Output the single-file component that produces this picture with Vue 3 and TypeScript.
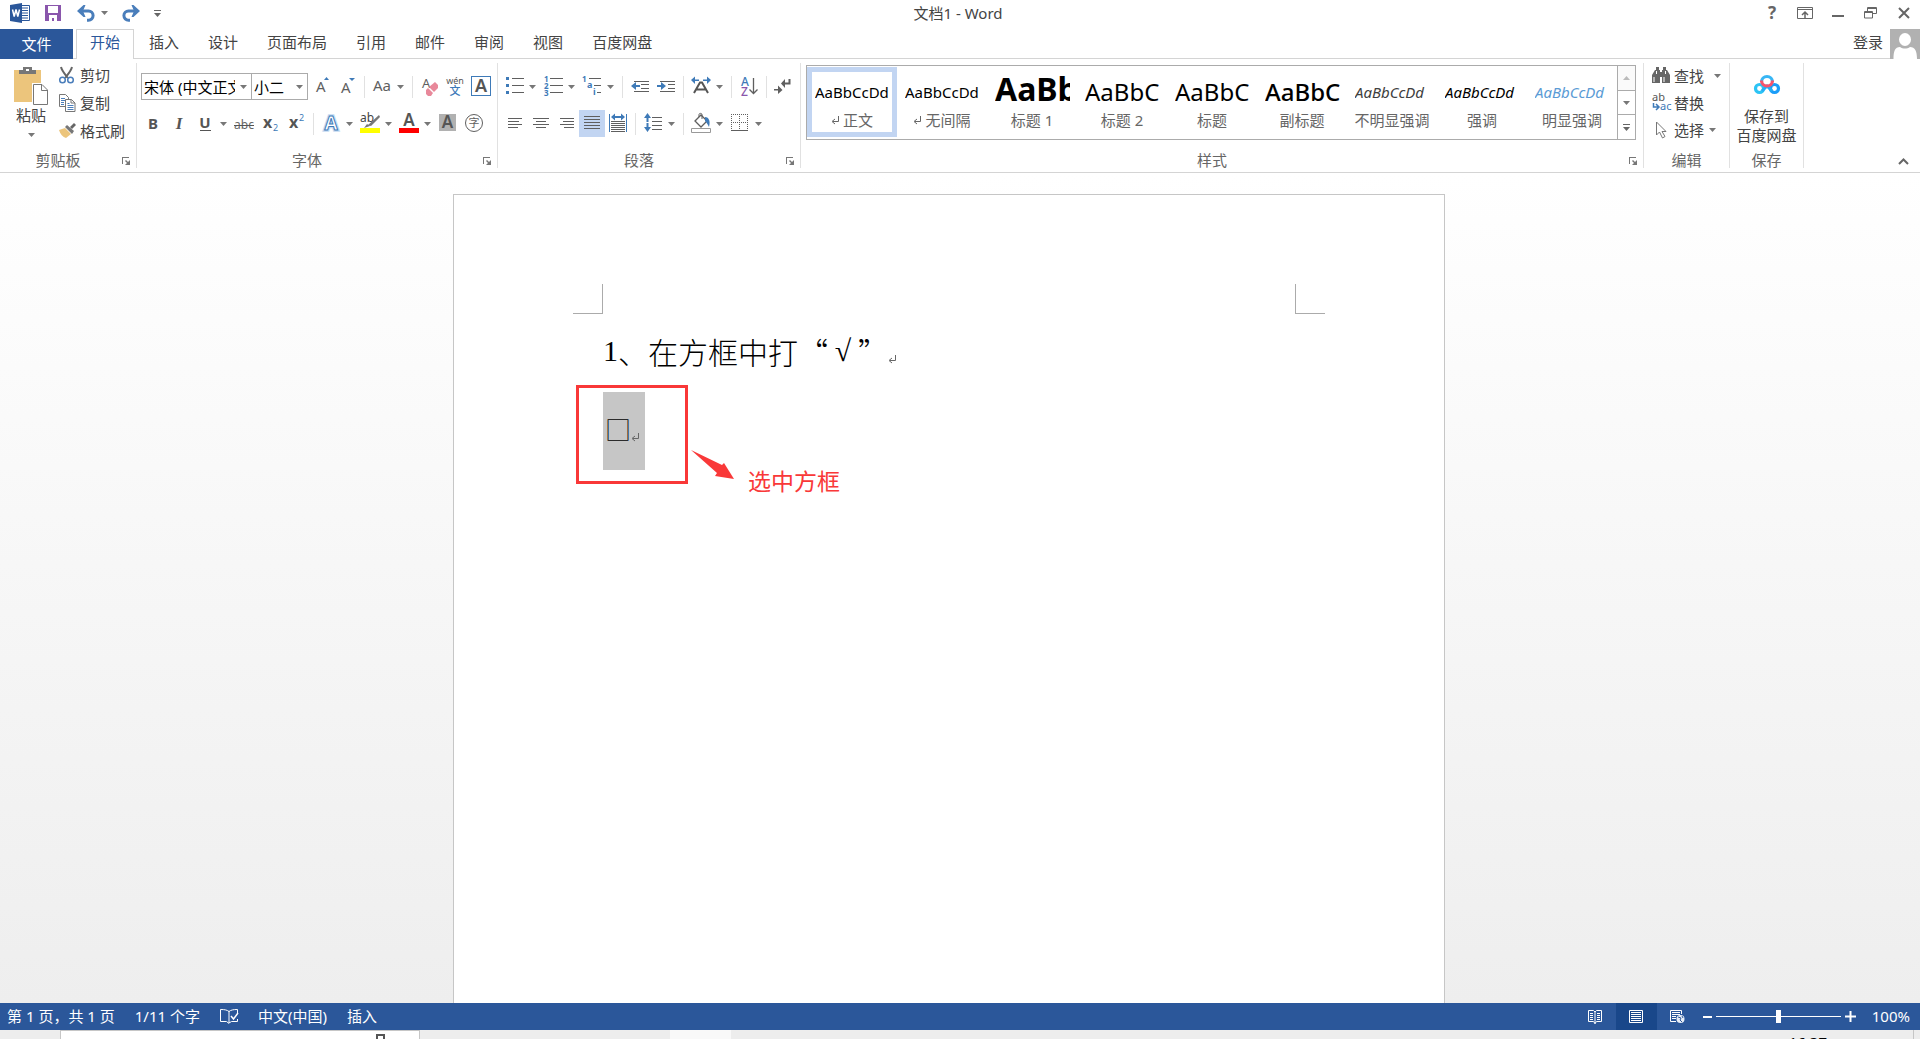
<script setup lang="ts">
import { h, ref } from 'vue'

interface IconDef { w: number; h: number; body: string }
interface Tool { icon: string; label: string; split?: boolean; active?: boolean; sep?: boolean }
interface StyleItem { sample: string; name: string; kind: string; mark?: boolean }

const G = '#5f5f5f'
const B = '#3e7ab8'
const sans = 'Noto Sans, Open Sans, sans-serif'
const cjk = 'Noto Sans CJK SC, sans-serif'

const text = (x: number, y: number, size: number, s: string, fill = G, extra = '') =>
  `<text x="${x}" y="${y}" font-size="${size}" font-family="${sans}" fill="${fill}" ${extra}>${s}</text>`
const lines = (rows: number[][], stroke = G) =>
  rows.map(([x1, x2, y]) => `<rect x="${x1}" y="${y}" width="${x2 - x1}" height="1" fill="${stroke}"/>`).join('')
const tool = (body: string): IconDef => ({ w: 22, h: 21, body })
const mid = 'text-anchor="middle"'

const icons: Record<string, IconDef> = {
  caret: { w: 7, h: 4, body: '<path d="M0 0h7L3.5 4z" fill="#777"/>' },
  caretUp: { w: 7, h: 4, body: '<path d="M0 4h7L3.5 0z" fill="#bbb"/>' },
  more: { w: 7, h: 7, body: '<path d="M0 0h7v1H0zM0 3h7L3.5 7z" fill="#666"/>' },
  launcher: { w: 8, h: 8, body: '<path d="M0 7V0h7v1H1v6z" fill="#777"/><path d="M8 3v5H3l2-2-2-2 1-1 2 2z" fill="#777"/>' },
  word: { w: 20, h: 20, body: '<path d="M11 2.500h8.500v15H11" fill="#fff" stroke="#2b579a"/><path d="M12 5h6M12 7.500h6M12 10h6M12 12.500h6M12 15h6" stroke="#2b579a"/><path d="M0 2 12 0v20L0 18z" fill="#2b579a"/><path d="M2.500 6.500l1.700 7 1.800-7 1.800 7 1.700-7" fill="none" stroke="#fff" stroke-width="1.500"/>' },
  save: { w: 16, h: 16, body: '<path d="M0 0h16v16H0z" fill="#8a56ac"/><path d="M3 1h10v7H3z" fill="#fff"/><path d="M4 10h8v6H9v-3H7v3H4z" fill="#fff"/><path d="M7 13h2v3H7z" fill="#8a56ac"/>' },
  undo: { w: 19, h: 17, body: '<path d="M3 6h8.500a4.500 4.500 0 0 1 0 9.200H10" fill="none" stroke="#4a7ebb" stroke-width="3"/><path d="M0 6 6.500 0h2L6 6l2.500 6h-2z" fill="#4a7ebb"/>' },
  redo: { w: 19, h: 17, body: '<path d="M16 6H7.500a4.500 4.500 0 0 0 0 9.200H9" fill="none" stroke="#4a7ebb" stroke-width="3"/><path d="M19 6 12.500 0h-2L13 6l-2.500 6h2z" fill="#4a7ebb"/>' },
  help: { w: 16, h: 18, body: text(8, 15, 17, '?', '#666', mid + ' font-weight="700"') },
  ribbonOpts: { w: 16, h: 12, body: '<path d="M.5.5h15v11H.5zM0 2.500h16" fill="none" stroke="#666"/><path d="M8 11V5M5 8l3-3 3 3" fill="none" stroke="#666" stroke-width="1.500"/>' },
  min: { w: 12, h: 12, body: '<path d="M0 8h12v2H0z" fill="#666"/>' },
  restore: { w: 13, h: 12, body: '<path d="M3.500 4V.5h9v6H9M3 1.500h10M.5 4.500h8v6.500h-8zM0 5.500h9" fill="none" stroke="#666"/>' },
  close: { w: 12, h: 12, body: '<path d="M1 1l10 10M11 1 1 11" stroke="#666" stroke-width="2"/>' },
  avatar: { w: 30, h: 30, body: '<path d="M0 0h30v30H0z" fill="#b1b1b1"/><ellipse cx="15" cy="10.500" rx="6" ry="6.500" fill="#fff"/><path d="M3.500 30c0-8 1.500-12 6.500-12 3 2 7 2 10 0 5 0 7 4 7 12z" fill="#fff"/>' },
  paste: { w: 34, h: 38, body: '<path d="M0 3h27v32H0z" fill="#ecc57c"/><path d="M5 7V3h4V0h9v3h4v4z" fill="#777"/><path d="M12 2h3v2h-3z" fill="#fff"/><path d="M18 16h11l6 6v16H18z" fill="#fff"/><path d="M19.500 17.500h8.500l5.500 5.500v14.500h-14zM27.500 17.500v6h6" fill="#fff" stroke="#777"/>' },
  cut: { w: 18, h: 18, body: '<path d="M3 1c1 4 3 6 7 11M14 1c-1 4-3 6-7 11" fill="none" stroke="#666" stroke-width="2"/><circle cx="4.500" cy="14" r="2.800" fill="#fff" stroke="#4a7ebb" stroke-width="1.500"/><circle cx="12.500" cy="14" r="2.800" fill="#fff" stroke="#4a7ebb" stroke-width="1.500"/>' },
  copy: { w: 18, h: 18, body: '<path d="M1.500.5h6l3 3v9h-9z" fill="#fff" stroke="#777"/><path d="M3 4.500h4M3 6.500h5M3 8.500h3M3 10.500h3" stroke="#4a7ebb"/><path d="M7.500 5.500h6l3.500 3.500v8.500H7.500zM13 5.500V9h4" fill="#fff" stroke="#777"/><path d="M9.500 9.500h2M9.500 11.500h6M9.500 13.500h6M9.500 15.500h6" stroke="#4a7ebb"/>' },
  painter: { w: 18, h: 16, body: '<path d="M1 7l6-2 6 6-5 4C5 14 2 11 1 7z" fill="#ecc57c"/><path d="M7 4l2-2 7 6-2 3z" fill="#777"/><path d="M12 4l4-4 2 2-4 4z" fill="#666"/>' },
  grow: tool(text(6, 16, 15, 'A') + `<path d="M14 4l2.500-3 2.500 3z" fill="${B}"/>`),
  shrink: tool(text(5, 17, 15, 'A') + `<path d="M13 2h6l-3 3z" fill="${B}"/>`),
  case: tool(text(2, 15, 15, 'Aa')),
  clear: tool(text(3, 12, 13, 'A') + '<path d="M7 14l2-2 5 5-2 3H9l-2-2z" fill="#e8889a"/><path d="M10 11l6-5 3 3v3l-4 4z" fill="#e8889a"/>'),
  phonetic: tool(text(10, 8, 9, 'wén', '#555', mid) + `<text x="10" y="19" font-size="11" font-family="${cjk}" fill="${B}" text-anchor="middle" font-weight="500">文</text>`),
  border: tool(`<rect x=".5" y=".5" width="19" height="19" fill="none" stroke="${B}"/>` + text(10, 16, 18, 'A', '#555', mid + ' font-weight="600"')),
  bold: tool(text(11, 16, 15, 'B', '#555', mid + ' font-weight="700"')),
  italic: tool(`<text x="11" y="16" font-size="17" font-family="Liberation Serif, serif" fill="#555" text-anchor="middle" font-style="italic" font-weight="700">I</text>`),
  underline: tool(text(11, 15, 15, 'U', '#555', mid + ' font-weight="700"') + '<path d="M6 17h11v1H6z" fill="#555"/>'),
  strike: tool(text(11, 16, 12, 'abc', '#666', mid) + '<path d="M1 12h20v1H1z" fill="#555"/>'),
  sub: tool(text(4, 15, 16, 'x', '#555', 'font-weight="700"') + text(14, 18, 9, '2', B)),
  sup: tool(text(4, 15, 16, 'x', '#555', 'font-weight="700"') + text(14, 8, 9, '2', B)),
  effects: tool(text(11, 17, 19, 'A', '#c7dcf2', mid + ' font-weight="700" stroke="#c7dcf2" stroke-width="3.5"') + text(11, 17, 19, 'A', '#fff', mid + ' font-weight="700" stroke="#3e7ab8" stroke-width="1"')),
  highlight: tool(text(1, 9, 12, 'ab', '#444') + '<path d="M20 2l1 2-9 9-3-1zM8 11l3 2-6 2z" fill="#777"/><path d="M1 15h20v5H1z" fill="#ff0"/>'),
  color: tool(text(11, 13, 17, 'A', '#555', mid + ' font-weight="600"') + '<path d="M1 15h20v5H1z" fill="red"/>'),
  shade: tool('<path d="M2 1h17v17H2z" fill="#b1b1b1"/>' + text(10.5, 15, 17, 'A', '#555', mid + ' font-weight="600"')),
  enclose: tool(`<circle cx="11" cy="10" r="8.500" fill="none" stroke="${G}"/><text x="11" y="14" font-size="11" font-family="${cjk}" fill="${G}" text-anchor="middle">字</text>`),
  bullets: tool(`<path d="M3 1h3v3H3zM3 8h3v3H3zM3 15h3v3H3z" fill="${B}"/>` + lines([[9, 21, 2], [9, 21, 9], [9, 21, 16]])),
  numbers: tool(text(2, 6, 8, '1', B, 'font-weight="700"') + text(2, 13, 8, '2', B, 'font-weight="700"') + text(2, 20, 8, '3', B, 'font-weight="700"') + lines([[8, 21, 2], [8, 21, 9], [8, 21, 16]])),
  multi: tool(text(1, 6, 8, '1', B, 'font-weight="700"') + text(6, 12, 9, 'a', B, 'font-weight="700"') + text(12, 19, 9, 'i', B, 'font-weight="700"') + lines([[8, 20, 2], [13, 20, 9], [16, 20, 16]])),
  outdent: tool(`<path d="M2 10l5-4v3h4v2H7v3z" fill="${B}"/>` + lines([[5, 20, 5], [12, 20, 8], [12, 20, 12], [5, 20, 15]])),
  indent: tool(`<path d="M11 10L6 6v3H2v2h4v3z" fill="${B}"/>` + lines([[5, 20, 5], [13, 20, 8], [13, 20, 12], [5, 20, 15]])),
  scale: tool(`<path d="M1 4l4-3.500v3h4v1.500H5v3zM21 4l-4-3.500v3h-4v1.500h4v3z" fill="${B}"/>` + `<path d="M4 17l6-10.500h2L18 17M6.500 13.500h9" fill="none" stroke="#555" stroke-width="2"/>`),
  sort: tool(text(3, 10, 12, 'A', B, 'font-weight="500"') + text(3, 20, 12, 'Z', '#8a56ac', 'font-weight="500"') + `<path d="M15.500 2v15M11.500 13.500l4 4 4-4" fill="none" stroke="${G}" stroke-width="1.300"/>`),
  marks: tool(`<path d="M16.500 3v4.500h-5" fill="none" stroke="${G}" stroke-width="2"/><path d="M12 3v9L8 7.500z" fill="${G}"/><path d="M1 13h4v-3.500l4.500 4.500L5 18v-3.500H1z" fill="${G}"/>`),
  left: tool(lines([[5, 19, 5], [5, 16, 8], [5, 19, 11], [5, 15, 14]])),
  center: tool(lines([[4, 20, 5], [7, 17, 8], [4, 20, 11], [7, 17, 14]])),
  right: tool(lines([[5, 19, 5], [8, 19, 8], [5, 19, 11], [9, 19, 14]])),
  justify: tool(lines([[3, 19, 3], [3, 19, 6], [3, 19, 9], [3, 19, 12], [3, 19, 15]])),
  distribute: tool(`<path d="M2 1h1v18H2zM19 1h1v18h-1zM4 4l4-3.500v2.500h6V.5L18 4l-4 3.500V5H8v2.500z" fill="${B}"/>` + lines([[4, 18, 8], [4, 18, 10], [4, 18, 12], [4, 18, 14], [4, 18, 16], [4, 18, 18]])),
  spacing: tool('<path d="M5.500 0L9 5H6.500v9H9l-3.500 5L2 14h2.500V5H2z" fill="#3e7ab8"/>' + '<path d="M2 9h7v1H2z" fill="#fff"/>' + lines([[10, 20, 4], [10, 20, 8], [10, 20, 12], [10, 20, 16]])),
  fill: tool(`<path d="M5 8l6-6 6 6-6 6z" fill="#fff" stroke="${G}" stroke-width="1.300"/><path d="M9 4V1.500c0-1.500 3-1.500 3 0V6" fill="none" stroke="${G}"/><path d="M15 4c3 0 6 3 4 10-1-2-2-4-4-6z" fill="${B}"/><path d="M1.500 15.500h19v4h-19z" fill="#fff" stroke="#999"/>`),
  borders: tool(`<path d="M2.500 1v17M10.500 1v17M18.500 1v17M2 1.500h17M2 9.500h17" stroke="${G}" stroke-dasharray="1 1"/><path d="M2 17h17v1H2z" fill="${G}"/>`),
  find: { w: 18, h: 17, body: '<path d="M0 8l3-5h5v13H0zM10 3h5l3 5v8h-8zM4 0h3v3H4zM11 0h3v3h-3zM8 5h2v5H8z" fill="#666"/><path d="M2 10v5M12 10v5M4.500 4v3M13.500 4v3" stroke="#fff"/>' },
  replace: { w: 20, h: 20, body: text(0, 8, 11, 'ab', '#555') + text(8, 17, 11, 'ac', B) + `<path d="M1.500 10v4H6M4 11l3 3-3 3" fill="none" stroke="${B}" stroke-width="1.500"/>` },
  select: { w: 18, h: 18, body: '<path d="M4.500 1v13l3-3 3 6 2.500-1.500-3-5h4z" fill="#fff" stroke="#777"/>' },
  netdisk: { w: 26, h: 21, body: '<circle cx="5.500" cy="14.500" r="4" fill="none" stroke="#2cc4f5" stroke-width="3.200"/><circle cx="20.500" cy="14.500" r="4" fill="none" stroke="#1a9cf8" stroke-width="3.200"/><path d="M8 17l5-5 5 5" fill="none" stroke="#24aef6" stroke-width="3"/><path d="M7.500 8a5.500 5.500 0 0 1 11 0" fill="none" stroke="#37b6f5" stroke-width="3.200"/><path d="M18.500 6.500a5.500 5.500 0 0 1-11 0" fill="none" stroke="#f6536e" stroke-width="3.200"/>' },
  collapse: { w: 11, h: 7, body: '<path d="M1 6l4.500-4.500L10 6" fill="none" stroke="#666" stroke-width="2"/>' },
  pilcrow: { w: 8, h: 8, body: '<path d="M7.500 0v5.500H2M4 3L1 5.500 4 8" fill="none" stroke="#666"/>' },
  proof: { w: 18, h: 15, body: '<path d="M9 2.500C7 1 5 .5.5.5v12h6L9 14.500M9 2v12M9 2.500C11 1 13 .5 17.500.5V4M9 14l2.500-1.500h6V10" fill="none" stroke="#fff"/><path d="M11 7l2.500 3L18 4" fill="none" stroke="#fff" stroke-width="1.500"/>' },
  read: { w: 14, h: 14, body: '<path d="M.5.5h5L7 2l1.500-1.500h5v11h-5L7 13.500 5.500 11.500h-5zM7 2v12" fill="none" stroke="#fff"/><path d="M2 3.500h3M2 5.500h3M2 7.500h3M2 9.500h3M9 3.500h3M9 5.500h3M9 7.500h3M9 9.500h3" stroke="#fff"/>' },
  print: { w: 14, h: 14, body: '<path d="M.5.5h13v12H.5z" fill="none" stroke="#fff"/><path d="M2 2.500h10M2 4.500h10M2 6.500h10M2 8.500h10M2 10.500h10" stroke="#fff"/>' },
  web: { w: 15, h: 14, body: '<path d="M11.500 4V.5H.5v11H6" fill="none" stroke="#fff"/><path d="M2 2.500h8M2 4.500h8M2 6.500h4M2 8.500h4" stroke="#fff"/><circle cx="10.500" cy="9" r="4" fill="#e8eef7"/><path d="M8 7l3 1-1 2 2 2M12 6l1 2" fill="none" stroke="#2b579a"/>' },
  minus: { w: 9, h: 2, body: '<path d="M0 0h9v2H0z" fill="#fff"/>' },
  plus: { w: 11, h: 11, body: '<path d="M0 4.500h4.500V0h2v4.500H11v2H6.500V11h-2V6.500H0z" fill="#fff"/>' },
  arrow: { w: 43, h: 30, body: '<path d="M0 0L31 15l2-2 10 16-19-3 2-3z" fill="#f93838"/>' },
}

const Icon = (p: { name: string }) => {
  const d = icons[p.name]
  return h('svg', { class: 'ico', width: d.w, height: d.h, viewBox: `0 0 ${d.w} ${d.h}`, 'aria-hidden': 'true', innerHTML: d.body })
}
Icon.props = ['name']

const tabs = ['开始', '插入', '设计', '页面布局', '引用', '邮件', '审阅', '视图', '百度网盘']
const fontTop: Tool[] = [
  { icon: 'grow', label: '增大字号' }, { icon: 'shrink', label: '减小字号' },
  { icon: 'case', label: '更改大小写', split: true, sep: true },
  { icon: 'clear', label: '清除格式', sep: true }, { icon: 'phonetic', label: '拼音指南' }, { icon: 'border', label: '字符边框' },
]
const fontBottom: Tool[] = [
  { icon: 'bold', label: '加粗' }, { icon: 'italic', label: '倾斜' }, { icon: 'underline', label: '下划线', split: true },
  { icon: 'strike', label: '删除线' }, { icon: 'sub', label: '下标' }, { icon: 'sup', label: '上标' },
  { icon: 'effects', label: '文本效果', split: true, sep: true }, { icon: 'highlight', label: '突出显示', split: true },
  { icon: 'color', label: '字体颜色', split: true }, { icon: 'shade', label: '字符底纹' }, { icon: 'enclose', label: '带圈字符' },
]
const paraTop: Tool[] = [
  { icon: 'bullets', label: '项目符号', split: true }, { icon: 'numbers', label: '编号', split: true }, { icon: 'multi', label: '多级列表', split: true },
  { icon: 'outdent', label: '减少缩进', sep: true }, { icon: 'indent', label: '增加缩进' },
  { icon: 'scale', label: '中文版式', split: true, sep: true }, { icon: 'sort', label: '排序', sep: true }, { icon: 'marks', label: '编辑标记', sep: true },
]
const paraBottom: Tool[] = [
  { icon: 'left', label: '左对齐' }, { icon: 'center', label: '居中' }, { icon: 'right', label: '右对齐' },
  { icon: 'justify', label: '两端对齐', active: true }, { icon: 'distribute', label: '分散对齐' },
  { icon: 'spacing', label: '行距', split: true, sep: true }, { icon: 'fill', label: '底纹', split: true, sep: true }, { icon: 'borders', label: '边框', split: true },
]
const styles: StyleItem[] = [
  { sample: 'AaBbCcDd', name: '正文', kind: 'plain', mark: true },
  { sample: 'AaBbCcDd', name: '无间隔', kind: 'plain', mark: true },
  { sample: 'AaBb', name: '标题 1', kind: 'h1' },
  { sample: 'AaBbC', name: '标题 2', kind: 'h2' },
  { sample: 'AaBbC', name: '标题', kind: 'h2' },
  { sample: 'AaBbC', name: '副标题', kind: 'h2 strong' },
  { sample: 'AaBbCcDd', name: '不明显强调', kind: 'em subtle' },
  { sample: 'AaBbCcDd', name: '强调', kind: 'em' },
  { sample: 'AaBbCcDd', name: '明显强调', kind: 'em accent' },
]
const fontName = ref('宋体 (中文正文)')
const fontSize = ref('小二')
const zoom = ref(50)
</script>

<template>
  <div class="app">
    <header class="titlebar">
      <div class="quick">
        <span class="slot logo"><Icon name="word" /></span>
        <button class="slot save" aria-label="保存"><Icon name="save" /></button>
        <button class="slot undo" aria-label="撤消"><Icon name="undo" /><Icon name="caret" /></button>
        <button class="slot redo" aria-label="恢复"><Icon name="redo" /></button>
        <button class="slot custom" aria-label="自定义快速访问工具栏"><Icon name="more" /></button>
      </div>
      <div class="title">文档1 - Word</div>
      <div class="window">
        <button aria-label="帮助"><Icon name="help" /></button>
        <button aria-label="功能区显示选项"><Icon name="ribbonOpts" /></button>
        <button aria-label="最小化"><Icon name="min" /></button>
        <button aria-label="还原"><Icon name="restore" /></button>
        <button aria-label="关闭"><Icon name="close" /></button>
      </div>
    </header>

    <nav class="tabs">
      <button class="file">文件</button>
      <button v-for="(t, i) in tabs" :key="t" class="tab" :class="{ on: i === 0 }">{{ t }}</button>
      <a class="login" href="#">登录</a>
      <Icon name="avatar" />
    </nav>

    <section class="ribbon">
      <div class="group clipboard">
        <div class="body">
          <button class="big"><Icon name="paste" /><span>粘贴</span><Icon name="caret" /></button>
          <div class="stack">
            <button class="line"><span class="pic"><Icon name="cut" /></span>剪切</button>
            <button class="line"><span class="pic"><Icon name="copy" /></span>复制</button>
            <button class="line"><span class="pic"><Icon name="painter" /></span>格式刷</button>
          </div>
        </div>
        <div class="caption"><span>剪贴板</span><button class="launch" aria-label="剪贴板选项"><Icon name="launcher" /></button></div>
      </div>

      <div class="group font">
        <div class="body rows">
          <div class="row">
            <div class="combo name"><input v-model="fontName" aria-label="字体"><Icon name="caret" /></div>
            <div class="combo size"><input v-model="fontSize" aria-label="字号"><Icon name="caret" /></div>
            <template v-for="t in fontTop" :key="t.icon">
              <i v-if="t.sep" class="sep"></i>
              <button class="tool" :class="{ split: t.split }" :aria-label="t.label"><Icon :name="t.icon" /><Icon v-if="t.split" name="caret" /></button>
            </template>
          </div>
          <div class="row">
            <template v-for="t in fontBottom" :key="t.icon">
              <i v-if="t.sep" class="sep"></i>
              <button class="tool" :class="{ split: t.split }" :aria-label="t.label"><Icon :name="t.icon" /><Icon v-if="t.split" name="caret" /></button>
            </template>
          </div>
        </div>
        <div class="caption"><span>字体</span><button class="launch" aria-label="字体选项"><Icon name="launcher" /></button></div>
      </div>

      <div class="group para">
        <div class="body rows">
          <div v-for="(r, n) in [paraTop, paraBottom]" :key="n" class="row">
            <template v-for="t in r" :key="t.icon">
              <i v-if="t.sep" class="sep"></i>
              <button class="tool" :class="{ split: t.split, active: t.active }" :aria-label="t.label"><Icon :name="t.icon" /><Icon v-if="t.split" name="caret" /></button>
            </template>
          </div>
        </div>
        <div class="caption"><span>段落</span><button class="launch" aria-label="段落选项"><Icon name="launcher" /></button></div>
      </div>

      <div class="group styles">
        <div class="body">
          <div class="gallery">
            <button v-for="(s, i) in styles" :key="s.name" class="style" :class="{ on: i === 0 }">
              <span class="sample" :class="s.kind">{{ s.sample }}</span>
              <span class="label"><Icon v-if="s.mark" name="pilcrow" />{{ s.name }}</span>
            </button>
            <div class="scroller">
              <button class="off" aria-label="上一行"><Icon name="caretUp" /></button>
              <button aria-label="下一行"><Icon name="caret" /></button>
              <button aria-label="其他"><Icon name="more" /></button>
            </div>
          </div>
        </div>
        <div class="caption"><span>样式</span><button class="launch" aria-label="样式选项"><Icon name="launcher" /></button></div>
      </div>

      <div class="group edit">
        <div class="body">
          <div class="stack">
            <button class="line wide"><span class="pic"><Icon name="find" /></span>查找<Icon name="caret" /></button>
            <button class="line"><span class="pic"><Icon name="replace" /></span>替换</button>
            <button class="line"><span class="pic"><Icon name="select" /></span>选择<Icon name="caret" /></button>
          </div>
        </div>
        <div class="caption"><span>编辑</span></div>
      </div>

      <div class="group netdisk">
        <div class="body">
          <button class="big"><Icon name="netdisk" /><span>保存到<br>百度网盘</span></button>
        </div>
        <div class="caption"><span>保存</span></div>
      </div>

      <button class="collapse" aria-label="折叠功能区"><Icon name="collapse" /></button>
    </section>

    <main class="workspace">
      <article class="page">
        <div class="crops"><i class="crop start"></i><i class="crop end"></i></div>
        <p><span class="digit">1</span>、在方框中打“<span class="digit check">√</span>”<Icon name="pilcrow" /></p>
        <p><span class="selected">□<Icon name="pilcrow" /></span></p>
        <div class="frame"></div>
        <div class="pointer"><Icon name="arrow" /></div>
        <div class="note">选中方框</div>
      </article>
    </main>

    <footer class="status">
      <span class="pages">第 1 页，共 1 页</span>
      <span>1/11 个字</span>
      <Icon name="proof" />
      <span>中文(中国)</span>
      <span>插入</span>
      <div class="views">
        <button aria-label="阅读视图"><Icon name="read" /></button>
        <button class="on" aria-label="页面视图"><Icon name="print" /></button>
        <button aria-label="Web 版式视图"><Icon name="web" /></button>
      </div>
      <div class="zoomer">
        <button aria-label="缩小"><Icon name="minus" /></button>
        <input v-model="zoom" class="zoom" type="range" min="0" max="100" aria-label="显示比例">
        <button aria-label="放大"><Icon name="plus" /></button>
      </div>
      <span class="percent">100%</span>
    </footer>

    <div class="taskbar">
      <div class="search"><i></i></div>
      <div class="running"></div>
      <div class="clock">16:37</div>
    </div>
  </div>
</template>

<style>
body { margin: 0; overflow: hidden; }
</style>

<style scoped>
.app { height: 100vh; display: flex; flex-direction: column; overflow: hidden; background: #fff; color: #444; font: 15px/20px "Noto Sans", "Noto Sans CJK SC", sans-serif; }
button { appearance: none; border: 0; margin: 0; padding: 0; background: none; color: inherit; font: inherit; }
.ico { display: block; flex: none; overflow: visible; }

.titlebar { flex: none; height: 29px; display: grid; grid-template-columns: 1fr auto 1fr; align-items: start; }
.quick { display: flex; align-items: center; height: 26px; padding-left: 10px; }
.slot { display: flex; align-items: center; }
.save { margin-left: 15px; }
.undo { margin-left: 16px; gap: 5px; }
.redo { margin-left: 13px; }
.custom { margin-left: 14px; }
.title { line-height: 26px; margin-right: 4px; }
.window { display: flex; justify-content: flex-end; }
.window button { width: 33px; height: 26px; display: flex; align-items: center; justify-content: center; }

.tabs { flex: none; height: 30px; display: flex; box-shadow: inset 0 -1px #d4d4d4; }
.file { width: 73px; margin-right: 3px; background: #2b579a; color: #fff; }
.tab { margin-right: 1px; padding: 0 13px 5px; border: 1px solid transparent; border-bottom: 0; line-height: 24px; }
.tab.on { background: #fff; border-color: #d4d4d4; color: #2b579a; }
.login { margin-left: auto; margin-right: 7px; line-height: 27px; color: #444; text-decoration: none; }

.ribbon { flex: none; display: flex; padding: 4px 0; border-bottom: 1px solid #d4d4d4; }
.group { display: flex; flex-direction: column; height: 105px; border-right: 1px solid #e1e1e1; }
.body { flex: 1; display: flex; min-height: 0; }
.caption { flex: none; height: 14px; line-height: 12px; display: flex; color: #666; }
.caption span { flex: 1; text-align: center; }
.launch { width: 20px; display: flex; align-items: center; justify-content: center; }
.clipboard { width: 136px; }
.font { width: 360px; }
.para { width: 302px; }
.styles { width: 842px; }
.edit { width: 85px; }
.netdisk { width: 73px; }

.big { display: flex; flex-direction: column; align-items: center; }
.clipboard .big { width: 54px; margin-left: 4px; padding-top: 4px; line-height: 16px; }
.clipboard .big span { margin: 2px 0 10px; }
.clipboard .stack { margin-top: -2px; }
.clipboard .line { height: 28px; }
.line { display: flex; align-items: center; height: 27px; gap: 4px; }
.line .ico:last-child { margin-left: 1px; }
.line.wide .ico:last-child { margin-left: 6px; }
.pic { width: 18px; display: flex; }
.pic .ico:last-child, .line.wide .pic .ico:last-child { margin-left: 0; }
.edit .stack { padding-left: 8px; margin-top: -1px; }
.netdisk .big { width: 100%; padding-top: 11px; gap: 12px; line-height: 19px; }

.rows { flex-direction: column; gap: 10px; padding: 10px 0 0 3px; }
.row { display: flex; align-items: center; height: 27px; }
.tool { width: 26px; height: 27px; padding-left: 2px; display: flex; align-items: center; flex: none; box-sizing: border-box; }
.split { width: 39px; gap: 4px; }
.tool.active { background: #c2d5f2; }
.sep { width: 1px; height: 22px; margin: 0 4px; background: #e1e1e1; flex: none; }
.combo { display: flex; align-items: center; box-sizing: border-box; height: 27px; border: 1px solid #ababab; color: #000; }
.combo input { flex: 1; min-width: 0; border: 0; padding: 0; margin: 0 5px 0 2px; outline: 0; background: none; font: inherit; color: inherit; height: 24px; }
.combo.name { width: 111px; margin-left: 1px; padding-right: 4px; }
.combo.size { width: 57px; margin-left: -1px; padding-right: 4px; }

.styles .body { padding: 2px 0 0 5px; }
.gallery { display: flex; height: 73px; border: 1px solid #ababab; }
.style { width: 90px; height: 70px; margin-top: 1px; box-sizing: border-box; border: 5px solid transparent; display: flex; flex-direction: column; }
.style.on { border-color: #c2d5f2; }
.sample { width: 75px; height: 40px; margin: 0 2px 0 3px; line-height: 40px; overflow: hidden; text-align: left; white-space: nowrap; color: #000; }
.h1 { font-size: 32px; font-weight: 700; line-height: 34px; }
.h2 { font-size: 24px; }
.strong { font-weight: 500; }
.em { font-style: italic; }
.subtle { color: #404040; }
.accent { color: #5b9bd5; }
.label { align-self: stretch; display: flex; align-items: center; justify-content: center; gap: 4px; line-height: 16px; color: #666; white-space: nowrap; }
.scroller { width: 17px; border-left: 1px solid #ababab; display: flex; flex-direction: column; }
.scroller button { flex: 1; display: flex; align-items: center; justify-content: center; border-top: 1px solid #ababab; }
.scroller .off { background: #fafafa; border-top: 0; }
.collapse { margin: 0 11px 3px auto; align-self: flex-end; }

.workspace { flex: 1; min-height: 0; overflow: hidden; display: flex; justify-content: center; padding: 21px 22px 0 0; background: linear-gradient(#fff, #eee); }
.page { position: relative; width: 990px; box-sizing: content-box; border: 1px solid #c6c6c6; border-bottom: 0; background: #fff; }
.crops { display: flex; justify-content: space-between; padding: 89px 119px 0; }
.crop { width: 29px; height: 29px; border-bottom: 1px solid #ababab; }
.start { border-right: 1px solid #ababab; }
.end { border-left: 1px solid #ababab; }
.page p { margin: 0; padding-left: 149px; height: 78px; line-height: 74px; display: flex; align-items: flex-start; color: #000; font-family: "Noto Sans CJK SC", sans-serif; font-size: 30px; font-weight: 300; }
.page .digit { font-family: "Liberation Serif", serif; font-weight: 400; }
.page .check { width: 30px; text-align: center; }
.page p .ico { margin-top: 41px; }
.selected { width: 40px; height: 78px; padding-left: 2px; display: flex; align-items: flex-start; background: #c6c6c6; font-size: 26px; }
.frame { position: absolute; left: 122px; top: 190px; width: 106px; height: 93px; border: 3px solid #f93838; }
.pointer { position: absolute; left: 237px; top: 255px; }
.note { position: absolute; left: 294px; top: 271px; font-size: 23px; line-height: 30px; color: #f93838; }

.status { flex: none; height: 27px; line-height: 24px; display: flex; align-items: center; background: #2b579a; color: #fff; padding: 0 10px 0 7px; gap: 20px; }
.status > span { height: 26px; }
.views { margin-left: auto; margin-right: -15px; display: flex; align-self: stretch; }
.views button { width: 41px; display: flex; align-items: center; justify-content: center; }
.views .on { background: #19478a; }
.zoomer { display: flex; align-items: center; gap: 4px; margin-right: -4px; }
.zoomer button { display: flex; }
.zoom { appearance: none; width: 125px; height: 13px; margin: 0; background: linear-gradient(#fff, #fff) center / 100% 1px no-repeat; }
.zoom::-webkit-slider-thumb { appearance: none; width: 5px; height: 13px; background: #fff; }

.taskbar { flex: none; height: 9px; display: flex; overflow: hidden; background: #ededed; color: #000; }
.search { width: 358px; margin-left: 60px; background: #fff; border: 1px solid #c6c6c6; border-bottom: 0; }
.search i { display: block; width: 5px; height: 8px; margin: 3px 0 0 315px; border: 2px solid #555; }
.running { width: 61px; margin-left: 250px; background: #f9f9f9; }
.clock { margin-left: auto; padding-right: 86px; line-height: 24px; margin-right: 6px; border-right: 1px solid #c6c6c6; }
</style>
